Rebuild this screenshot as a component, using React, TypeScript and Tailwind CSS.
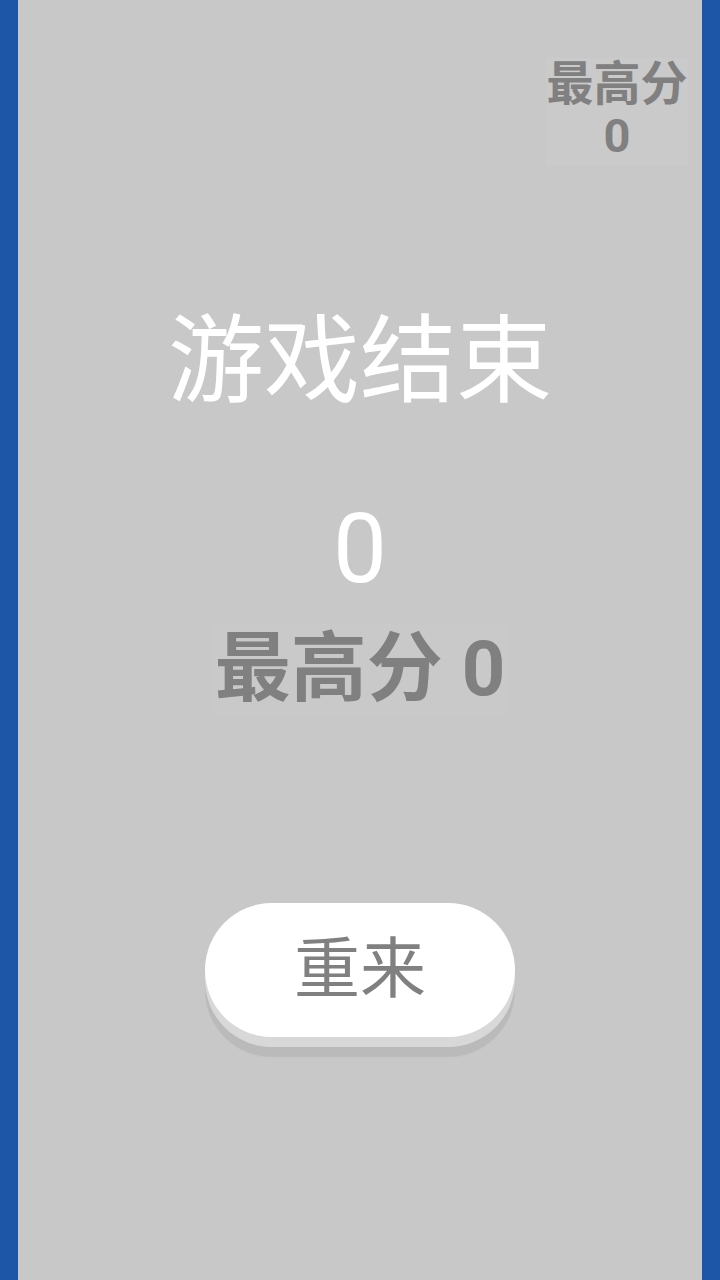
const cjk = "font-['Roboto','Noto_Sans_CJK_SC',sans-serif]";

export default function App() {
  const best = 0;
  const score = 0;

  return (
    <div className="flex h-[1280px] w-[720px] bg-[#1d55a7]">
      <main className={`mx-[18px] flex flex-1 flex-col bg-[#c8c8c8] ${cjk}`}>
        <div className="flex justify-end pr-[14px] pt-[58px]">
          <div className="flex w-[142px] flex-col items-center whitespace-nowrap bg-[#cacaca] pb-[4px] text-[47px] font-bold leading-[52px] text-[#808080]">
            <span>最高分</span>
            <span>{best}</span>
          </div>
        </div>

        <h1 className="mt-[140px] text-center text-[96px] font-normal leading-[110px] text-white">
          游戏结束
        </h1>

        <p className="mt-[78px] text-center text-[96px] font-normal leading-[110px] text-white">{score}</p>

        <div className="mt-[19px] flex justify-center">
          <p className="bg-[#c9c9c9] px-[2px] text-[76px] font-bold leading-[92px] text-[#808080]">
            最高分 {best}
          </p>
        </div>

        <div className="mt-[188px] flex justify-center">
          <button
            type="button"
            className="h-[134px] w-[310px] rounded-full bg-white text-[66px] leading-none text-[#808080] shadow-[0_10px_0_#d8d8d8,0_20px_1px_#bababa]"
          >
            重来
          </button>
        </div>
      </main>
    </div>
  );
}
